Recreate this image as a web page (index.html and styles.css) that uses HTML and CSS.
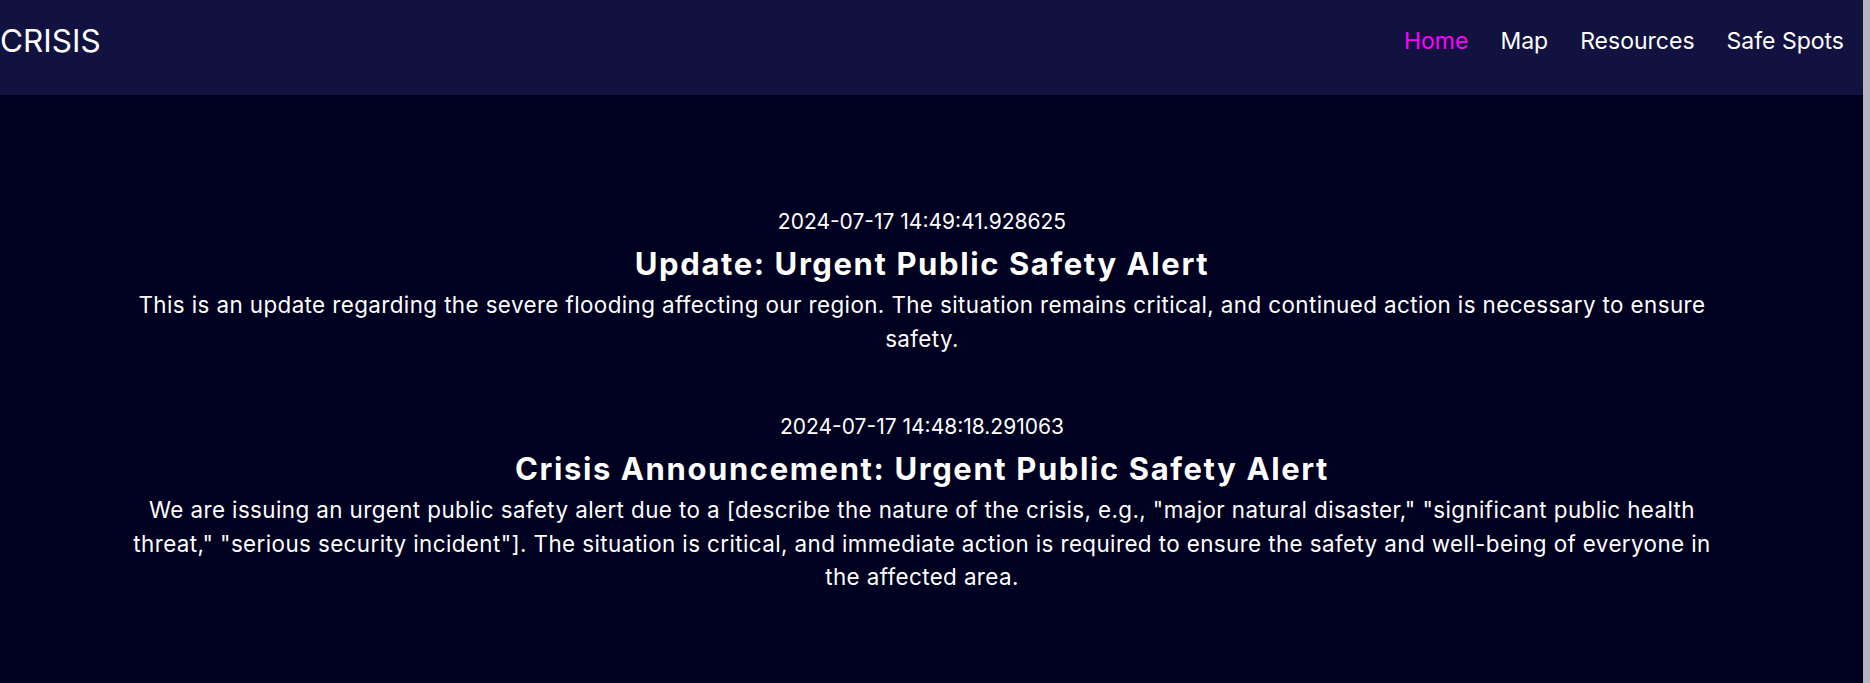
FILE: index.html
```html
<!DOCTYPE html>
<html lang="en">
<head>
<meta charset="utf-8">
<title>CRISIS</title>
<link rel="stylesheet" href="styles.css">
</head>
<body>
<div class="page">
  <div class="app">
    <header class="topbar">
      <div class="brand">CRISIS</div>
      <nav class="nav">
        <a class="nav-link active" href="#">Home</a>
        <a class="nav-link" href="#">Map</a>
        <a class="nav-link" href="#">Resources</a>
        <a class="nav-link" href="#">Safe Spots</a>
      </nav>
    </header>
    <main class="feed">
      <article class="notice">
        <div class="stamp">2024-07-17 14:49:41.928625</div>
        <h2 class="title">Update: Urgent Public Safety Alert</h2>
        <p class="body">This is an update regarding the severe flooding affecting our region. The situation remains critical, and continued action is necessary to ensure safety.</p>
      </article>
      <article class="notice">
        <div class="stamp">2024-07-17 14:48:18.291063</div>
        <h2 class="title">Crisis Announcement: Urgent Public Safety Alert</h2>
        <p class="body">We are issuing an urgent public safety alert due to a [describe the nature of the crisis, e.g., "major natural disaster," "significant public health threat," "serious security incident"]. The situation is critical, and immediate action is required to ensure the safety and well-being of everyone in the affected area.</p>
      </article>
    </main>
  </div>
  <div class="gutter"></div>
</div>
</body>
</html>
```

FILE: styles.css
```css
html, body {
  margin: 0;
  padding: 0;
  height: 100%;
}
body {
  font-family: "Inter", "Open Sans", sans-serif;
  color: #ffffff;
  background: #000020;
  overflow: hidden;
}
.page {
  display: flex;
  height: 100vh;
}
.app {
  flex: 1;
  display: flex;
  flex-direction: column;
  min-width: 0;
}
.gutter {
  width: 7px;
  background: #b5b5be;
}
.topbar {
  height: 95px;
  box-sizing: border-box;
  background: #121240;
  display: flex;
  align-items: center;
  justify-content: space-between;
  padding: 0 19px 14px 0;
}
.brand {
  font-size: 31.5px;
  font-weight: 400;
  line-height: 40px;
}
.nav {
  display: flex;
  gap: 32px;
}
.nav-link {
  color: #ffffff;
  text-decoration: none;
  font-size: 23px;
  line-height: 32px;
}
.nav-link.active {
  color: #ff00ff;
}
.feed {
  flex: 1;
  padding: 110px 19px 0 0;
  display: flex;
  flex-direction: column;
  align-items: center;
  gap: 55px;
}
.notice {
  width: 1590px;
  text-align: center;
}
.stamp {
  font-size: 21px;
  line-height: 34px;
  margin-bottom: 5px;
}
.title {
  margin: 0 0 4px;
  font-size: 31px;
  line-height: 40px;
  font-weight: 700;
  letter-spacing: 1.6px;
}
.body {
  margin: 0;
  font-size: 22.4px;
  line-height: 33.5px;
  letter-spacing: 0.4px;
}
```
